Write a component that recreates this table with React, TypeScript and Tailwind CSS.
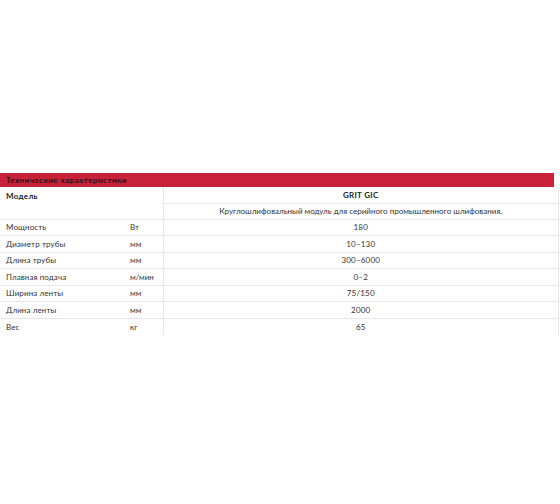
const specs: [string, string, string][] = [
  ['Мощность', 'Вт', '180'],
  ['Диаметр трубы', 'мм', '10–130'],
  ['Длина трубы', 'мм', '300–6000'],
  ['Плавная подача', 'м/мин', '0–2'],
  ['Ширина ленты', 'мм', '75/150'],
  ['Длина ленты', 'мм', '2000'],
  ['Вес', 'кг', '65'],
];

export default function App() {
  return (
    <div className="w-[560px] h-[504px] bg-white pt-[173px] text-[#333] text-[8px] font-['Lato',sans-serif]">
      <div className="w-[554px] h-[14px] bg-[#c8213a] px-[6px] flex items-center font-bold tracking-[0.45px] text-[#2a1015]">
        Технические характеристики
      </div>
      <table className="w-[559px] border-collapse table-fixed">
        <colgroup>
          <col className="w-[130px]" />
          <col className="w-[33px]" />
          <col />
        </colgroup>
        <tbody>
          <tr className="h-[16px]">
            <td rowSpan={2} colSpan={2} className="align-top pl-[6px] pt-[3px] font-bold tracking-[0.3px] text-[#222] border-r border-[#e6e6e6]">
              Модель
            </td>
            <td className="text-center font-bold tracking-[0.3px] text-[#222] border-b border-r border-[#e6e6e6]">GRIT GIC</td>
          </tr>
          <tr className="h-[16px]">
            <td className="text-center border-r border-[#e6e6e6]">
              Круглошлифовальный модуль для серийного промышленного шлифования.
            </td>
          </tr>
          {specs.map(([name, unit, value], i) => (
            <tr key={name} className={'h-[16.5px] ' + (i < specs.length - 1 ? 'border-b' : '') + ' border-t border-[#e6e6e6]'}>
              <td className="pl-[6px] tracking-[0.1px]">{name}</td>
              <td>{unit}</td>
              <td className="text-center tracking-[0.2px] border-l border-r border-[#e6e6e6]">{value}</td>
            </tr>
          ))}
        </tbody>
      </table>
    </div>
  );
}
